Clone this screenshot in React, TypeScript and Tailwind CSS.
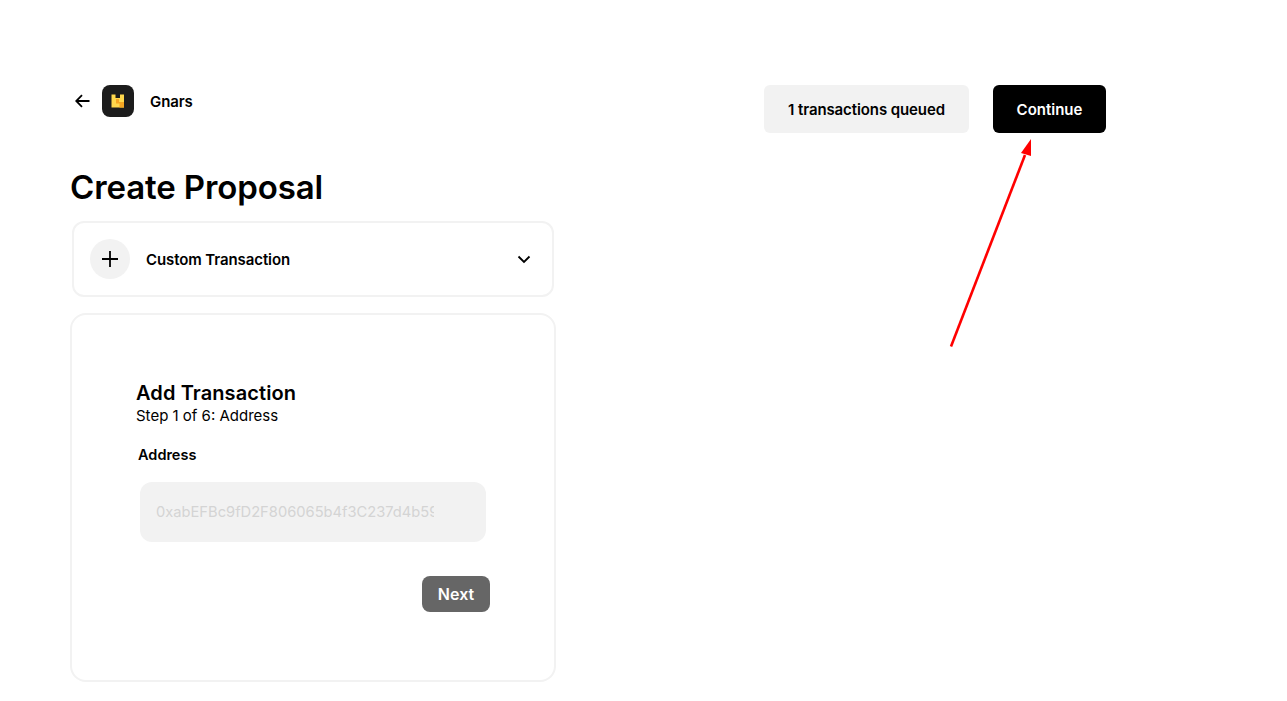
import React from "react";

export default function App() {
  return (
    <div className="relative h-[701px] w-full overflow-hidden bg-white text-black font-['Inter',sans-serif]">
      <div className="flex items-start pl-[70px] pt-[85px]">
        <div className="flex w-[486px] flex-col">
          <div className="flex h-[32px] items-center">
            <svg width="15" height="14" viewBox="0 0 15 14" fill="none" className="ml-[5px]">
              <path d="M14.5 7H1.5M7 1.2L1.2 7L7 12.8" stroke="#000" strokeWidth="1.8" />
            </svg>
            <div className="ml-[12px] flex h-[32px] w-[32px] items-center justify-center rounded-lg bg-[#1c1c1c]">
              <svg width="14" height="14" viewBox="0 0 14 14">
                <path d="M0.5 0.5H4.5V4H9V0.5H13V13.5H0.5Z" fill="#ffd84d" />
                <path d="M5 5H8V8H13V13.5H8.5V9.5H5Z" fill="#f5a623" />
              </svg>
            </div>
            <span className="ml-[16px] pt-[2px] text-[15px] font-semibold tracking-[-0.1px]">Gnars</span>
          </div>
          <h1 className="mt-[46px] h-[48px] text-[33px] font-semibold leading-[48px] tracking-[-0.12px]">Create Proposal</h1>
          <div className="mx-[2px] mt-[10px] flex h-[76px] items-center rounded-xl border-2 border-[#f2f2f2] pl-[16px] pr-[21px]">
            <div className="flex h-[40px] w-[40px] items-center justify-center rounded-full bg-[#f2f2f2]">
              <svg width="16" height="16" viewBox="0 0 16 16" fill="none">
                <path d="M8 0V16M0 8H16" stroke="#000" strokeWidth="1.8" />
              </svg>
            </div>
            <span className="ml-[16px] pt-[2px] text-[15px] font-semibold tracking-[-0.1px]">Custom Transaction</span>
            <svg width="14" height="9" viewBox="0 0 14 9" fill="none" className="ml-auto">
              <path d="M1.5 1.5L7 7L12.5 1.5" stroke="#000" strokeWidth="1.8" />
            </svg>
          </div>
          <div className="mt-[16px] h-[369px] rounded-2xl border-2 border-[#f2f2f2] pl-[64px] pr-[64px] pt-[64px]">
            <h2 className="text-[20px] font-semibold leading-[28px] tracking-[0.1px]">Add Transaction</h2>
            <p className="text-[15px] leading-[18px]">Step 1 of 6: Address</p>
            <label className="ml-[2px] mt-[20px] block text-[14.5px] font-semibold leading-[20px]">Address</label>
            <div className="ml-[4px] mt-[17px] flex h-[60px] w-[346px] items-center rounded-xl bg-[#f2f2f2] px-[16px]">
              <input
                readOnly
                placeholder="0xabEFBc9fD2F806065b4f3C237d4b59D9A"
                className="w-[278px] bg-transparent text-[14.7px] outline-none placeholder:text-[#d4d4d4]"
              />
            </div>
            <div className="mt-[34px] flex w-[354px] justify-end">
              <button className="h-[36px] w-[68px] rounded-lg bg-[#666666] text-[16px] font-semibold text-white">Next</button>
            </div>
          </div>
        </div>
        <div className="ml-[208px] flex gap-[24px]">
          <div className="flex h-[48px] w-[205px] items-center justify-center rounded-md bg-[#f2f2f2] pt-[2px] text-[15px] font-semibold tracking-[-0.1px]">1 transactions queued</div>
          <button className="h-[48px] w-[113px] rounded-md bg-black pt-[2px] text-[15px] font-semibold text-white">Continue</button>
        </div>
      </div>
      <svg width="100" height="225" viewBox="0 0 100 225" fill="none" className="absolute left-[940px] top-[130px]">
        <path d="M11 216.5L85 25" stroke="#ff0000" strokeWidth="2.6" />
        <path d="M91 9L81 23L91 26Z" fill="#ff0000" />
      </svg>
    </div>
  );
}
